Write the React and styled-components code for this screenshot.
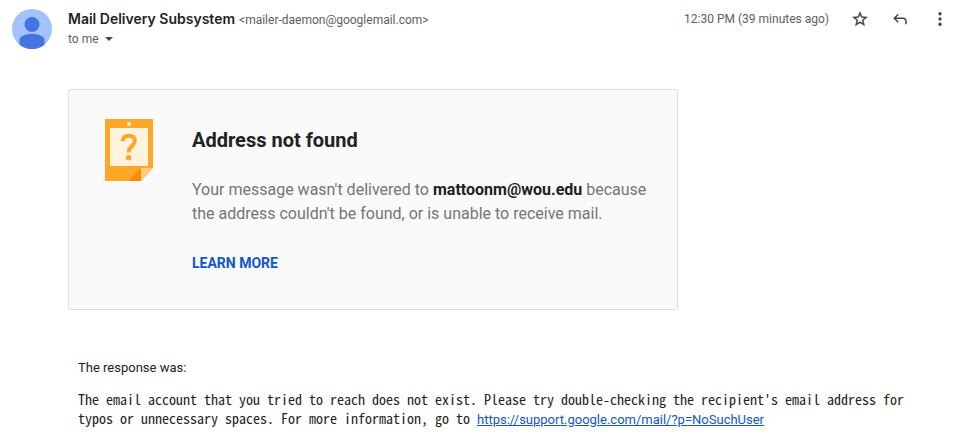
import styled, { createGlobalStyle } from "styled-components";

export default function App() {
  return (
    <>
      <GlobalStyle />
      <StyledHeader>
        <AvatarIcon />
        <StyledSender>
          <StyledSenderLine>
            <StyledName>Mail Delivery Subsystem</StyledName>
            <StyledEmail>&lt;mailer-daemon@googlemail.com&gt;</StyledEmail>
          </StyledSenderLine>
          <StyledRecipient type="button" aria-label="Show details">
            to me
            <ArrowIcon />
          </StyledRecipient>
        </StyledSender>
        <StyledActions>
          <StyledTime>12:30 PM (39 minutes ago)</StyledTime>
          <StyledIconButton type="button" aria-label="Star">
            <StarIcon />
          </StyledIconButton>
          <StyledIconButton type="button" aria-label="Reply">
            <ReplyIcon />
          </StyledIconButton>
          <StyledIconButton type="button" aria-label="More">
            <MoreIcon />
          </StyledIconButton>
        </StyledActions>
      </StyledHeader>
      <StyledBody>
        <StyledCard>
          <NoteIcon />
          <div>
            <StyledTitle>Address not found</StyledTitle>
            <StyledMessage>
              Your message wasn't delivered to <b>mattoonm@wou.edu</b> because
              the address couldn't be found, or is unable to receive mail.
            </StyledMessage>
            <StyledLearnMore href="#learn-more">LEARN MORE</StyledLearnMore>
          </div>
        </StyledCard>
        <StyledResponse>
          <StyledLabel>The response was:</StyledLabel>
          <StyledReason>
            The email account that you tried to reach does not exist. Please try
            double-checking the recipient's email address for typos or
            unnecessary spaces. For more information, go to{" "}
            <StyledLink href="https://support.google.com/mail/?p=NoSuchUser">
              https://support.google.com/mail/?p=NoSuchUser
            </StyledLink>
          </StyledReason>
        </StyledResponse>
      </StyledBody>
    </>
  );
}

function AvatarIcon() {
  return (
    <StyledSvg width="40" height="40" viewBox="0 0 40 40" aria-hidden="true">
      <defs>
        <clipPath id="avatar">
          <circle cx="20" cy="20" r="20" />
        </clipPath>
      </defs>
      <g clipPath="url(#avatar)">
        <rect width="40" height="40" fill="#a1c2fa" />
        <circle cx="20" cy="15.5" r="7.5" fill="#4374e0" />
        <path
          d="M7.5 42V31c0-3.500 5-6 12.500-6s12.500 2.500 12.500 6v11z"
          fill="#4374e0"
        />
      </g>
    </StyledSvg>
  );
}

function ArrowIcon() {
  return (
    <StyledSvg width="20" height="20" viewBox="0 0 20 20" aria-hidden="true">
      <path d="M6 8h8l-4 4z" fill="#444746" />
    </StyledSvg>
  );
}

function StarIcon() {
  return (
    <StyledSvg width="18" height="18" viewBox="0 0 24 24" aria-hidden="true">
      <path
        d="M22 9.240l-7.190-.620L12 2 9.190 8.630 2 9.240l5.460 4.730L5.820 21 12 17.270 18.180 21l-1.630-7.030L22 9.240zM12 15.400l-3.760 2.270 1-4.280-3.320-2.880 4.380-.380L12 6.100l1.710 4.040 4.380.380-3.320 2.880 1 4.280L12 15.400z"
        fill="#444746"
        stroke="#444746"
        strokeWidth="0.5"
      />
    </StyledSvg>
  );
}

function ReplyIcon() {
  return (
    <StyledSvg width="18" height="18" viewBox="0 0 24 24" aria-hidden="true">
      <path
        d="M19 19v-4q0-1.250-.875-2.125T16 12H6.825l3.600 3.600L9 17l-6-6 6-6 1.425 1.400-3.600 3.600H16q2.075 0 3.538 1.462T21 15v4z"
        fill="#444746"
      />
    </StyledSvg>
  );
}

function MoreIcon() {
  return (
    <StyledSvg width="18" height="18" viewBox="0 0 24 24" aria-hidden="true">
      <g fill="#444746">
        <circle cx="12" cy="5" r="2.200" />
        <circle cx="12" cy="12" r="2.200" />
        <circle cx="12" cy="19" r="2.200" />
      </g>
    </StyledSvg>
  );
}

function NoteIcon() {
  return (
    <StyledSvg width="48" height="62" viewBox="0 0 48 62" aria-hidden="true">
      <path d="M0 0h48v49L36 62H0z" fill="#ffa726" />
      <circle cx="24" cy="5" r="2" fill="#fff3e0" />
      <rect x="5" y="9" width="38" height="38" fill="#fff3e0" />
      <path d="M36 49v13H23z" fill="#fb8c00" />
      <path d="M36 49h12L36 62z" fill="#ffcc80" />
      <path
        d="M17.800 22.300c0-3.800 2.600-5.500 6-5.500 3.800 0 6 2 6 5.300 0 4.900-6.200 5.100-6.200 11.400"
        fill="none"
        stroke="#ffa726"
        strokeWidth="4"
      />
      <circle cx="23.600" cy="38.800" r="2.700" fill="#ffa726" />
    </StyledSvg>
  );
}

const GlobalStyle = createGlobalStyle`
  * {
    box-sizing: border-box;
  }

  body {
    margin: 0;
    background-color: #fff;
    color: #212121;
    font-family: Roboto, "Liberation Sans", sans-serif;
  }
`;

const StyledSvg = styled.svg`
  display: block;
  flex-shrink: 0;
`;

const StyledHeader = styled.header`
  display: flex;
  align-items: flex-start;
  gap: 16px;
  padding: 9px 5px 0 12px;
`;

const StyledSender = styled.div`
  flex: 1;
  min-width: 0;
`;

const StyledSenderLine = styled.div`
  display: flex;
  align-items: baseline;
  gap: 4px;
  height: 20px;
  line-height: 20px;
`;

const StyledName = styled.h3`
  margin: 0;
  font-family: Inter, Roboto, sans-serif;
  font-size: 14px;
  font-weight: 600;
  color: #1f1f1f;
`;

const StyledEmail = styled.span`
  font-size: 12px;
  color: #5e5e5e;
`;

const StyledRecipient = styled.button`
  display: flex;
  align-items: center;
  padding: 0;
  border: none;
  background: none;
  font-family: inherit;
  font-size: 12px;
  line-height: 20px;
  color: #5e5e5e;
`;

const StyledActions = styled.div`
  display: flex;
  align-items: center;
  gap: 22px;
`;

const StyledTime = styled.span`
  font-size: 12px;
  line-height: 20px;
  color: #5e5e5e;
`;

const StyledIconButton = styled.button`
  padding: 0;
  border: none;
  background: none;
  cursor: pointer;
`;

const StyledBody = styled.main`
  padding: 40px 36px 0 68px;
`;

const StyledCard = styled.section`
  display: flex;
  gap: 39px;
  max-width: 610px;
  padding: 29px 24px 36px 36px;
  border: 1px solid #e0e0e0;
  border-radius: 2px;
  background-color: #fafafa;
`;

const StyledTitle = styled.h2`
  margin: 9px 0 26px;
  font-size: 20px;
  line-height: 24px;
`;

const StyledMessage = styled.p`
  margin: 0 0 27px;
  font-size: 16px;
  line-height: 24px;
  color: #757575;

  b {
    color: #212121;
  }
`;

const StyledLearnMore = styled.a`
  display: block;
  font-size: 14px;
  font-weight: 700;
  line-height: 20px;
  color: #1155cc;
  text-decoration: none;
`;

const StyledResponse = styled.section`
  padding: 48px 0 0 10px;
`;

const StyledLabel = styled.p`
  margin: 0 0 12px;
  font-size: 13px;
  line-height: 20px;
  color: #222;
`;

const StyledReason = styled.p`
  margin: 0;
  font-family: "Noto Sans Mono CJK SC", "Liberation Mono", monospace;
  font-size: 14px;
  line-height: 19px;
  color: #222;
`;

const StyledLink = styled.a`
  font-family: Roboto, sans-serif;
  font-size: 13px;
  color: #1155cc;
`;
